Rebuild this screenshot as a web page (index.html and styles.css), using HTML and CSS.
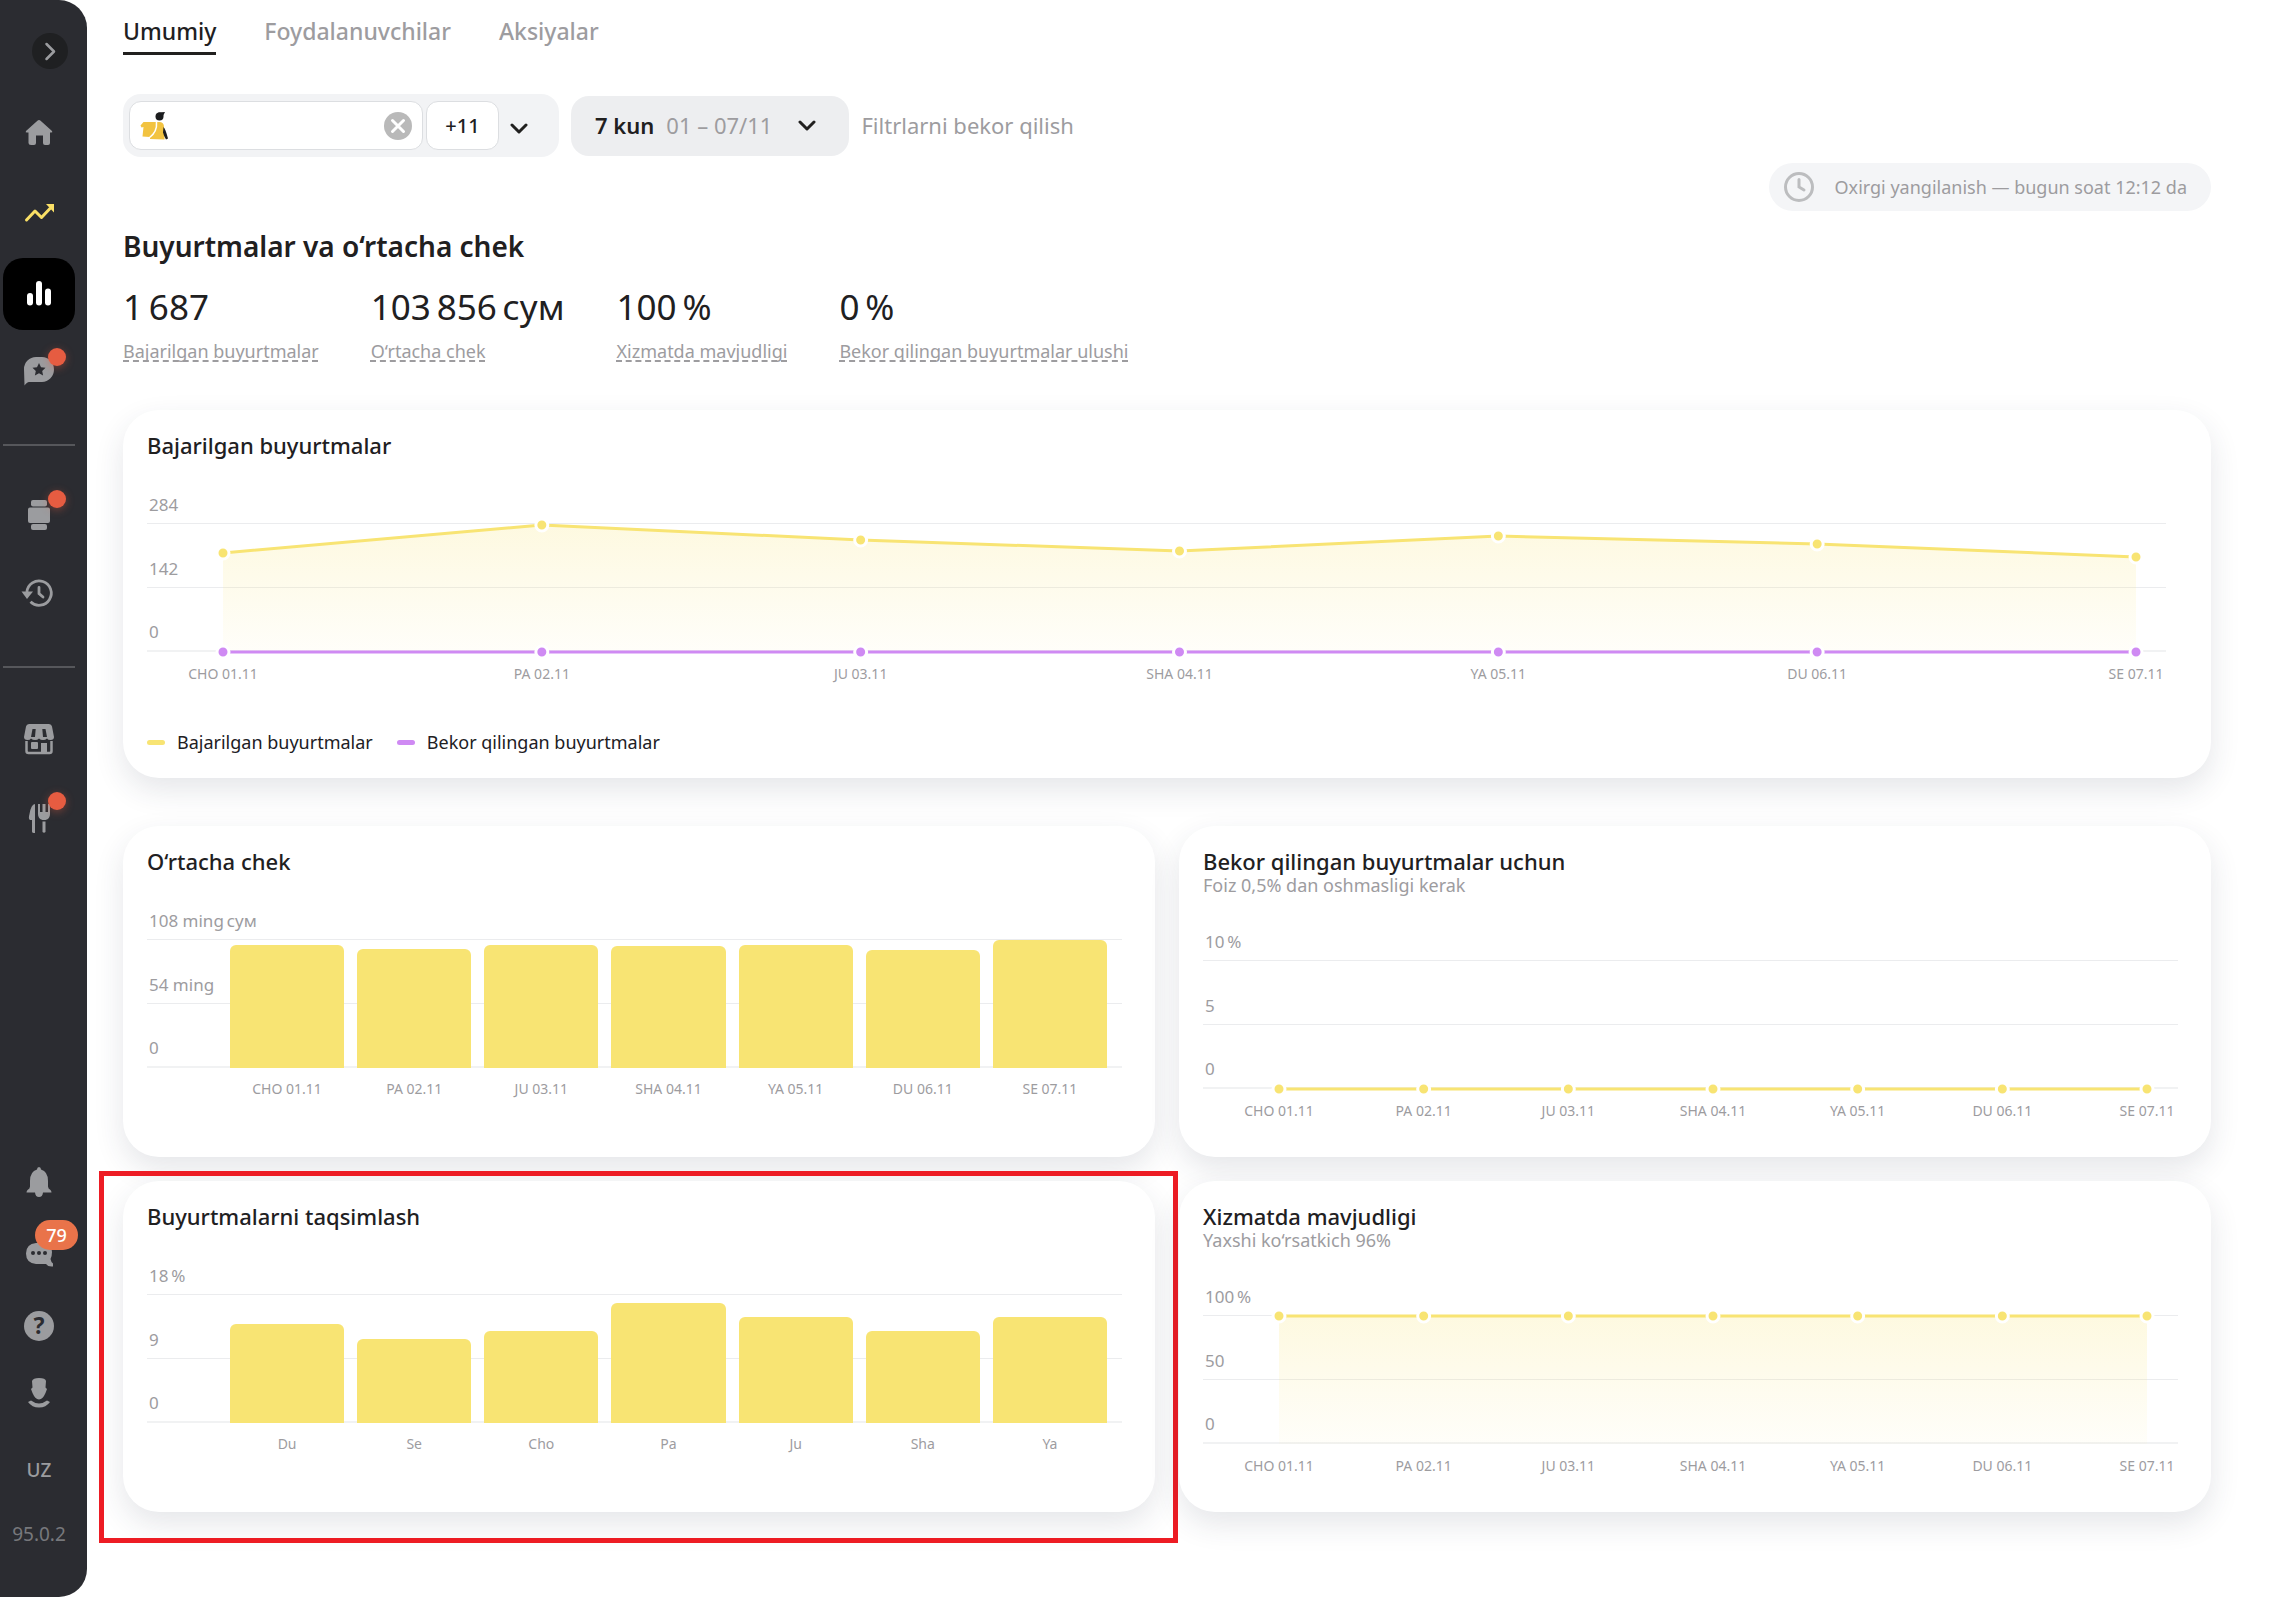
FILE: index.html
```html
<!DOCTYPE html>
<html lang="uz">
<head>
    <meta charset="UTF-8">
    <meta name="viewport" content="width=device-width, initial-scale=1.0">
    <title>Statistika</title>
    <link rel="stylesheet" href="styles.css">
</head>
<body>
    <nav class="sidebar" aria-label="Menyu">
        <button class="sidebar-toggle" type="button" aria-label="Menyuni ochish">
            <svg width="36" height="36" viewBox="0 0 36 36"><path d="M14.500 11l7.500 7.500-7.500 7.500" fill="none" stroke="currentColor" stroke-width="2.500" stroke-linecap="round" stroke-linejoin="round"/></svg>
        </button>

        <div class="nav-group">
            <a href="#" class="nav-item" aria-label="Bosh sahifa">
                <svg class="icon" viewBox="0 0 30 30"><path d="M13.400 1.700q1.600-1.400 3.200 0L28 12q1 1.500-.8 1.500H26V24q0 2-2 2h-3q-2 0-2-2v-7.500h-7V24q0 2-2 2H7q-2.500 0-2.500-2V13.500H2.800Q1 13.500 2 12z"/></svg>
            </a>
            <a href="#" class="nav-item nav-item-trend" aria-label="O‘sish">
                <svg class="icon" viewBox="0 0 30 30"><path d="M2.500 21l8.500-9 6.500 6.500L26 9.500" fill="none" stroke="currentColor" stroke-width="3" stroke-linecap="round" stroke-linejoin="round"/><path d="M22 5h8v8.500z"/></svg>
            </a>
            <a href="#" class="nav-item nav-item-active" aria-label="Statistika">
                <svg class="icon" viewBox="0 0 30 30"><rect x="3" y="14" width="6" height="12.500" rx="3"/><rect x="12" y="2" width="6" height="24.500" rx="3"/><rect x="21" y="9.500" width="6" height="17" rx="3"/></svg>
            </a>
            <a href="#" class="nav-item" aria-label="Sharhlar">
                <svg class="icon" viewBox="0 0 30 30"><path d="M12-2h6a12 12.500 0 0 1 0 25H5q-2 0-4.500 3.500L0 10A12 12 0 0 1 12-2z"/><path class="cutout" d="M15 4l2 4.300 4.500.5-3.300 3.100.9 4.600-4.100-2.300-4.100 2.300.9-4.600-3.300-3.100 4.500-.5z"/></svg>
                <span class="dot"></span>
            </a>
        </div>

        <hr class="nav-divider">

        <div class="nav-group">
            <a href="#" class="nav-item" aria-label="Buyurtmalar">
                <svg class="icon" viewBox="0 0 30 30"><rect x="7" y="-1" width="16" height="6.500" rx="2"/><rect x="4" y="6.500" width="22" height="15.500" rx="2"/><rect x="7" y="23" width="16" height="6" rx="2"/></svg>
                <span class="dot"></span>
            </a>
            <a href="#" class="nav-item" aria-label="Tarix">
                <svg class="icon" viewBox="0 0 30 30"><path d="M2.900 11A12.200 12.200 0 1 1 6.500 20.800" fill="none" stroke="currentColor" stroke-width="2.800"/><path d="M-2.500 10.500H9L3 18z"/><path d="M15 6.500v6l4 3.500" fill="none" stroke="currentColor" stroke-width="2.800" stroke-linecap="round"/></svg>
            </a>
        </div>

        <hr class="nav-divider">

        <div class="nav-group">
            <a href="#" class="nav-item" aria-label="Restoran">
                <svg class="icon" viewBox="0 0 30 30"><path d="M5 1h20q2.500 0 3 2.500L30 14q0 3-3.500 3-2.500 0-3.500-1.500Q21.500 17 19 17t-4-1.500Q13.500 17 11 17t-4-1.500Q6 17 3.500 17 0 17 0 14L2 3.500Q2.500 1 5 1z"/><path class="cutout" d="M8.500 6h3.200l-.7 8h-4zM18.300 6h3.200L23 14h-4z"/><path d="M2.500 18v10q0 2 2 2h21q2 0 2-2V18" fill="none" stroke="currentColor" stroke-width="2.500"/><rect x="7" y="19" width="7" height="7" rx="1"/><path d="M17 30V20h6v10z"/></svg>
            </a>
            <a href="#" class="nav-item" aria-label="Menyu taomlari">
                <svg class="icon" viewBox="0 0 30 30"><path d="M11 1v29q-3 0-3-1.500V17H6q-2-1-.5-6Q7 1.500 11 1z"/><path d="M14 1h2v8h2.500V1h3v8H24V1h2v10q0 5-4.500 6h-3Q14 16 14 11zM18.500 18.500h3V29q-1.500 1.500-3 0z"/></svg>
                <span class="dot"></span>
            </a>
        </div>

        <div class="nav-bottom">
            <a href="#" class="nav-item" aria-label="Bildirishnomalar">
                <svg class="icon" viewBox="0 0 30 30"><path d="M15 0q2 0 2 2.500Q24 4.500 24 14v5.500q0 2 2.500 3.500 1 1 1 2.500H19Q18.500 30 15 30t-4-4.500H2.500Q2.500 24 3.500 23 6 21.500 6 19.500V14Q6 4.500 13 2.500 13 0 15 0z"/></svg>
            </a>
            <a href="#" class="nav-item" aria-label="Xabarlar">
                <svg class="icon" viewBox="0 0 30 30"><path d="M12 4h7q9 0 9 9 0 4-1.500 7 .5 3 2.500 4.500v3Q24 28 22 25H12Q2 24 2 14.500T12 4z"/><g class="cutout"><circle cx="9" cy="14" r="2"/><circle cx="15" cy="14" r="2"/><circle cx="21" cy="14" r="2"/></g></svg>
                <span class="badge">79</span>
            </a>
            <a href="#" class="nav-item" aria-label="Yordam">
                <svg class="icon" viewBox="0 0 30 30"><circle cx="15" cy="15" r="15"/><text class="cutout icon-mark" x="15" y="23">?</text></svg>
            </a>
            <a href="#" class="nav-item" aria-label="Profil">
                <svg class="icon" viewBox="0 0 30 30"><path d="M8-2q1-3 7-3 6.500 0 7 3l-.5 6.500L23 6l-1.500 4Q19 16 15 16.500 11 16 8.500 10L7 6l1.500-1.500z"/><path d="M4 19l3-1.500q8 6 16 0l3 1.500q-4 5.500-11 5.500T4 19z"/></svg>
            </a>
            <a href="#" class="nav-item nav-lang">UZ</a>
            <span class="version">95.0.2</span>
        </div>
    </nav>

    <main class="content">
        <div class="tabs">
            <a href="#" class="tab tab-active">Umumiy</a>
            <a href="#" class="tab">Foydalanuvchilar</a>
            <a href="#" class="tab">Aksiyalar</a>
        </div>

        <div class="filters">
            <div class="place-filter">
                <div class="place-chip">
                    <svg width="28" height="30" viewBox="0 0 28 30"><path d="M.5 14.500l3-3.500H20q4 .5 4 5l.500 12.500L10 28v-2l-7.500-.5 1-9.500-2 .5z" fill="#f2c341"/><path d="M16.500 11q1 10-7.500 16" fill="none" stroke="#fff" stroke-width="1.500"/><circle cx="19.500" cy="5.500" r="4" fill="#1c1d1f"/><path d="M18 1.500l7-.500-2.500 5z" fill="#1c1d1f"/><path d="M23.500 16q2 2 4.500 11.500l-2 1q-2-3-3-7z" fill="#1c1d1f"/></svg>
                    <input class="place-input" type="text" aria-label="Restoran">
                    <button class="clear-button" type="button" aria-label="Tozalash">
                        <svg width="28" height="28" viewBox="0 0 28 28"><circle cx="14" cy="14" r="14" fill="#b9b9b9"/><path d="M8.500 8.500l11 11m0-11l-11 11" stroke="#fff" stroke-width="3" stroke-linecap="round"/></svg>
                    </button>
                </div>
                <button class="place-more" type="button">+11</button>
                <button class="place-open" type="button" aria-label="Ro‘yxatni ochish">
                    <svg class="chevron" viewBox="0 0 18 12"><path d="M2 2l7 7 7-7"/></svg>
                </button>
            </div>
            <button class="period" type="button">
                <span class="period-name">7 kun</span>
                <span class="period-dates">01 – 07/11</span>
                <svg class="chevron" viewBox="0 0 18 12"><path d="M2 2l7 7 7-7"/></svg>
            </button>
            <button class="reset" type="button">Filtrlarni bekor qilish</button>
        </div>

        <div class="updated">
            <svg width="30" height="30" viewBox="0 0 30 30" fill="none" stroke="#bcbdbf" stroke-width="3" stroke-linecap="round"><circle cx="15" cy="15" r="13.500"/><path d="M15 7.500V15l5 3"/></svg>
            <span>Oxirgi yangilanish — bugun soat 12:12 da</span>
        </div>

        <h1>Buyurtmalar va o‘rtacha chek</h1>

        <div class="metrics">
            <div class="metric">
                <div class="metric-value">1&#8198;687</div>
                <a href="#" class="metric-label">Bajarilgan buyurtmalar</a>
            </div>
            <div class="metric">
                <div class="metric-value">103&#8198;856&#8198;сум</div>
                <a href="#" class="metric-label">O‘rtacha chek</a>
            </div>
            <div class="metric">
                <div class="metric-value">100&#8198;%</div>
                <a href="#" class="metric-label">Xizmatda mavjudligi</a>
            </div>
            <div class="metric">
                <div class="metric-value">0&#8198;%</div>
                <a href="#" class="metric-label">Bekor qilingan buyurtmalar ulushi</a>
            </div>
        </div>

        <section class="card">
            <h2>Bajarilgan buyurtmalar</h2>
            <div class="chart chart-wide">
                <div class="grid-lines"><span>284</span><span>142</span><span>0</span></div>
                <svg class="line-plot">
                    <defs>
                        <linearGradient id="area" x1="0" y1="0" x2="0" y2="1">
                            <stop offset="0" stop-color="#f8e473" stop-opacity=".22"/>
                            <stop offset="1" stop-color="#f8e473" stop-opacity=".04"/>
                        </linearGradient>
                    </defs>
                    <svg width="100%" height="128" viewBox="0 0 600 128" preserveAspectRatio="none">
                        <path class="area" d="M0 29L100 1 200 16 300 27 400 12 500 20 600 33V128H0z"/>
                        <polyline class="line" points="0,29 100,1 200,16 300,27 400,12 500,20 600,33"/>
                    </svg>
                    <line class="line line-cancel" x1="0" y1="128" x2="100%" y2="128"/>
                    <g class="points">
                        <circle cx="0" cy="29" r="6"/><circle cx="16.667%" cy="1" r="6"/><circle cx="33.333%" cy="16" r="6"/><circle cx="50%" cy="27" r="6"/><circle cx="66.667%" cy="12" r="6"/><circle cx="83.333%" cy="20" r="6"/><circle cx="100%" cy="33" r="6"/>
                    </g>
                    <g class="points points-cancel">
                        <circle cx="0" cy="128" r="6"/><circle cx="16.667%" cy="128" r="6"/><circle cx="33.333%" cy="128" r="6"/><circle cx="50%" cy="128" r="6"/><circle cx="66.667%" cy="128" r="6"/><circle cx="83.333%" cy="128" r="6"/><circle cx="100%" cy="128" r="6"/>
                    </g>
                    <g class="ticks">
                        <text x="0" y="155">CHO 01.11</text><text x="16.667%" y="155">PA 02.11</text><text x="33.333%" y="155">JU 03.11</text><text x="50%" y="155">SHA 04.11</text><text x="66.667%" y="155">YA 05.11</text><text x="83.333%" y="155">DU 06.11</text><text x="100%" y="155">SE 07.11</text>
                    </g>
                </svg>
            </div>
            <div class="legend">
                <span class="legend-item">Bajarilgan buyurtmalar</span>
                <span class="legend-item legend-cancel">Bekor qilingan buyurtmalar</span>
            </div>
        </section>

        <div class="cards">
            <section class="card">
                <h2>O‘rtacha chek</h2>
                <div class="chart">
                    <div class="grid-lines"><span>108 ming&#8198;сум</span><span>54 ming</span><span>0</span></div>
                    <div class="bar-plot">
                        <div class="bar" style="height: 96%"></div>
                        <div class="bar" style="height: 93%"></div>
                        <div class="bar" style="height: 96%"></div>
                        <div class="bar" style="height: 95%"></div>
                        <div class="bar" style="height: 96%"></div>
                        <div class="bar" style="height: 92%"></div>
                        <div class="bar" style="height: 100%"></div>
                        <span>CHO 01.11</span><span>PA 02.11</span><span>JU 03.11</span><span>SHA 04.11</span><span>YA 05.11</span><span>DU 06.11</span><span>SE 07.11</span>
                    </div>
                </div>
            </section>

            <section class="card">
                <h2>Bekor qilingan buyurtmalar uchun</h2>
                <p class="card-note">Foiz 0,5% dan oshmasligi kerak</p>
                <div class="chart">
                    <div class="grid-lines"><span>10&#8198;%</span><span>5</span><span>0</span></div>
                    <svg class="line-plot">
                        <line class="line" x1="0" y1="128" x2="100%" y2="128"/>
                        <g class="points">
                            <circle cx="0" cy="128" r="6"/><circle cx="16.667%" cy="128" r="6"/><circle cx="33.333%" cy="128" r="6"/><circle cx="50%" cy="128" r="6"/><circle cx="66.667%" cy="128" r="6"/><circle cx="83.333%" cy="128" r="6"/><circle cx="100%" cy="128" r="6"/>
                        </g>
                        <g class="ticks">
                            <text x="0" y="155">CHO 01.11</text><text x="16.667%" y="155">PA 02.11</text><text x="33.333%" y="155">JU 03.11</text><text x="50%" y="155">SHA 04.11</text><text x="66.667%" y="155">YA 05.11</text><text x="83.333%" y="155">DU 06.11</text><text x="100%" y="155">SE 07.11</text>
                        </g>
                    </svg>
                </div>
            </section>

            <section class="card card-marked">
                <h2>Buyurtmalarni taqsimlash</h2>
                <div class="chart">
                    <div class="grid-lines"><span>18&#8198;%</span><span>9</span><span>0</span></div>
                    <div class="bar-plot">
                        <div class="bar" style="height: 77%"></div>
                        <div class="bar" style="height: 66%"></div>
                        <div class="bar" style="height: 72%"></div>
                        <div class="bar" style="height: 94%"></div>
                        <div class="bar" style="height: 83%"></div>
                        <div class="bar" style="height: 72%"></div>
                        <div class="bar" style="height: 83%"></div>
                        <span>Du</span><span>Se</span><span>Cho</span><span>Pa</span><span>Ju</span><span>Sha</span><span>Ya</span>
                    </div>
                </div>
            </section>

            <section class="card">
                <h2>Xizmatda mavjudligi</h2>
                <p class="card-note">Yaxshi ko‘rsatkich 96%</p>
                <div class="chart">
                    <div class="grid-lines"><span>100&#8198;%</span><span>50</span><span>0</span></div>
                    <svg class="line-plot">
                        <rect class="area" x="0" y="0" width="100%" height="128"/>
                        <line class="line" x1="0" y1="0" x2="100%" y2="0"/>
                        <g class="points">
                            <circle cx="0" cy="0" r="6"/><circle cx="16.667%" cy="0" r="6"/><circle cx="33.333%" cy="0" r="6"/><circle cx="50%" cy="0" r="6"/><circle cx="66.667%" cy="0" r="6"/><circle cx="83.333%" cy="0" r="6"/><circle cx="100%" cy="0" r="6"/>
                        </g>
                        <g class="ticks">
                            <text x="0" y="155">CHO 01.11</text><text x="16.667%" y="155">PA 02.11</text><text x="33.333%" y="155">JU 03.11</text><text x="50%" y="155">SHA 04.11</text><text x="66.667%" y="155">YA 05.11</text><text x="83.333%" y="155">DU 06.11</text><text x="100%" y="155">SE 07.11</text>
                        </g>
                    </svg>
                </div>
            </section>
        </div>
    </main>
</body>
</html>
```

FILE: styles.css
```css
:root {
    --text: #21201f;
    --muted: #9d9c9f;
    --icon: #9b9c9f;
    --sidebar: #2b2c31;
    --yellow: #f8e473;
    --purple: #cf8af3;
    --red: #e65c41;
}

* {
    box-sizing: border-box;
}

body {
    margin: 0;
    min-height: 100vh;
    display: flex;
    background: #fff;
    color: var(--text);
    font-family: "Noto Sans", sans-serif;
    font-size: 18px;
    line-height: 24px;
}

a {
    color: inherit;
    text-decoration: none;
}

button {
    border: 0;
    padding: 0;
    background: none;
    color: inherit;
    font: inherit;
    cursor: pointer;
}

/* Sidebar */
.sidebar {
    flex: none;
    width: 87px;
    display: flex;
    flex-direction: column;
    padding: 33px 12px 35px 3px;
    border-radius: 0 28px 28px 0;
    background: var(--sidebar);
    color: var(--icon);
}

.sidebar-toggle {
    width: 36px;
    height: 36px;
    margin: 0 0 29px 29px;
    border-radius: 50%;
    background: #1f2022;
}

.sidebar-toggle svg {
    display: block;
}

.nav-group {
    display: flex;
    flex-direction: column;
    gap: 8px;
}

.nav-item {
    position: relative;
    height: 72px;
    display: flex;
    align-items: center;
    justify-content: center;
    border-radius: 20px;
}

.nav-item-trend {
    color: #fae066;
}

.nav-item-active {
    background: #000;
    color: #fff;
}

.icon {
    width: 30px;
    height: 30px;
    overflow: visible;
    fill: currentColor;
}

.cutout {
    fill: var(--sidebar);
}

.icon-mark {
    font-size: 23px;
    font-weight: 700;
    text-anchor: middle;
}

.dot {
    position: absolute;
    top: 10px;
    left: 45px;
    width: 18px;
    height: 18px;
    border-radius: 50%;
    background: var(--red);
    box-shadow: 0 2px 8px rgba(230, 92, 65, 0.4);
}

.badge {
    position: absolute;
    top: 2px;
    left: 32px;
    min-width: 43px;
    border-radius: 15px;
    background: #e9734a;
    color: #fff;
    font-weight: 500;
    line-height: 30px;
    text-align: center;
}

.nav-divider {
    width: 100%;
    height: 2px;
    margin: 34px 0;
    border: 0;
    background: #56575b;
}

.nav-bottom {
    margin-top: auto;
}

.nav-lang {
    font-size: 19px;
    font-weight: 500;
}

.version {
    display: block;
    color: #77787c;
    font-size: 19px;
    line-height: 56px;
    text-align: center;
}

/* Content */
.content {
    flex: 1;
    min-width: 0;
    padding: 16px 78px 84px 36px;
}

.tabs {
    display: flex;
    gap: 48px;
    margin-bottom: 39px;
    font-size: 23px;
    line-height: 30px;
}

.tab {
    padding-bottom: 6px;
    border-bottom: 3px solid transparent;
    color: var(--muted);
    font-weight: 500;
}

.tab-active {
    border-color: var(--text);
    color: var(--text);
}

.filters {
    display: flex;
    align-items: center;
    gap: 12px;
    font-size: 22px;
}

.place-filter {
    display: flex;
    gap: 3px;
    padding: 7px 6px;
    border-radius: 18px;
    background: #f2f3f5;
}

.place-chip,
.place-more {
    height: 49px;
    border: 1px solid #dcdee1;
    border-radius: 12px;
    background: #fff;
}

.place-chip {
    width: 294px;
    display: flex;
    align-items: center;
    padding: 0 10px;
}

.place-input {
    flex: 1;
    min-width: 0;
    border: 0;
    outline: 0;
    font: inherit;
}

.clear-button svg {
    display: block;
}

.place-more {
    width: 73px;
    font-size: 20px;
    font-weight: 500;
}

.place-open {
    width: 51px;
    padding-right: 18px;
}

.chevron {
    width: 18px;
    height: 12px;
    fill: none;
    stroke: var(--text);
    stroke-width: 3;
    stroke-linecap: round;
    stroke-linejoin: round;
}

.period,
.reset {
    padding-bottom: 2px;
}

.period {
    display: flex;
    align-items: center;
    gap: 12px;
    height: 60px;
    padding-left: 24px;
    padding-right: 33px;
    border-radius: 18px;
    background: #edeef0;
}

.period .chevron {
    margin: 2px 0 0 14px;
}

.period-name {
    font-weight: 600;
}

.period-dates,
.reset {
    color: var(--muted);
}

.updated {
    width: fit-content;
    display: flex;
    align-items: center;
    gap: 21px;
    height: 48px;
    margin: 6px 0 18px auto;
    padding: 0 24px 0 15px;
    border-radius: 24px;
    background: #f4f5f7;
    color: var(--muted);
}

h1 {
    margin: 0 0 22px;
    font-size: 28px;
    font-weight: 600;
    line-height: 34px;
}

.metrics {
    display: flex;
    gap: 52px;
    margin-bottom: 47px;
}

.metric-value {
    margin-bottom: 10px;
    font-size: 35px;
    line-height: 44px;
}

.metric-label {
    display: block;
    color: var(--muted);
    text-decoration: underline dashed 2px;
    text-underline-offset: 2px;
    text-decoration-skip-ink: none;
}

/* Cards */
.card {
    position: relative;
    padding: 24px;
    border-radius: 36px;
    background: #fff;
    box-shadow: 0 12px 30px rgba(40, 50, 70, 0.12);
}

.cards {
    display: grid;
    grid-template-columns: 1fr 1fr;
    gap: 24px;
    margin-top: 48px;
}

.card-marked::after {
    content: "";
    position: absolute;
    inset: -10px -23px -31px -24px;
    border: 5px solid #ed1c24;
    pointer-events: none;
}

h2 {
    margin: 0 0 2px;
    font-size: 22px;
    font-weight: 500;
    line-height: 22px;
}

.card-note {
    margin: 0;
    color: var(--muted);
    line-height: 23px;
}

/* Charts: grid lines and the plot share the same grid area */
.chart {
    display: grid;
    grid-template-rows: auto 32px;
    padding-top: 2px;
    margin: 0 9px 12px 0;
}

.card-note + .chart {
    padding-top: 0;
}

.chart-wide {
    margin-right: 21px;
}

.grid-lines {
    grid-area: 1 / 1;
    display: grid;
    grid-auto-rows: 64px;
    color: var(--muted);
    font-size: 17px;
}

.grid-lines span {
    display: flex;
    align-items: flex-end;
    padding: 0 0 6px 2px;
    border-bottom: 1px solid #ebecee;
}

.grid-lines span:last-child {
    border-bottom: 2px solid #f1f2f3;
}

.line-plot {
    grid-area: 1 / 1 / 3 / 2;
    align-self: end;
    justify-self: end;
    width: calc(100% - 107px);
    height: 160px;
    margin-right: 31px;
    overflow: visible;
}

.chart-wide .line-plot {
    width: calc(100% - 106px);
    margin-right: 30px;
}

.area {
    fill: url(#area);
}

.line {
    fill: none;
    stroke: var(--yellow);
    stroke-width: 3;
    vector-effect: non-scaling-stroke;
}

.line-cancel {
    stroke: var(--purple);
}

.points {
    fill: var(--yellow);
    stroke: #fff;
    stroke-width: 3;
}

.points-cancel {
    fill: var(--purple);
}

.ticks {
    fill: var(--muted);
    font-size: 14px;
    text-anchor: middle;
}

.bar-plot {
    grid-area: 1 / 1 / 3 / 2;
    align-self: end;
    display: grid;
    grid-template: 128px 32px / repeat(7, 1fr);
    column-gap: 13px;
    align-items: end;
    margin: 0 15px 0 83px;
    color: var(--muted);
    font-size: 14px;
    line-height: 22px;
    text-align: center;
}

.bar {
    border-radius: 6px 6px 0 0;
    background: var(--yellow);
}

/* Legend */
.legend {
    display: flex;
    gap: 24px;
    margin-top: 46px;
}

.legend-item {
    display: flex;
    align-items: center;
    gap: 12px;
}

.legend-item::before {
    content: "";
    width: 18px;
    height: 5px;
    border-radius: 3px;
    background: var(--yellow);
}

.legend-cancel::before {
    background: var(--purple);
}
```
